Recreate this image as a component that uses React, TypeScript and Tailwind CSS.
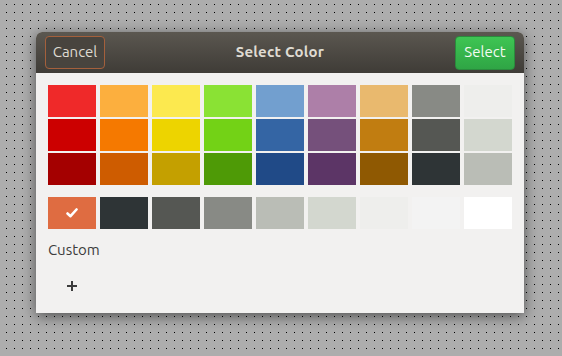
import React from 'react';

const rows = [
  ['#ef2929', '#fcaf3e', '#fce94f', '#8ae234', '#729fcf', '#ad7fa8', '#e9b96e', '#888a85', '#eeeeec'],
  ['#cc0000', '#f57900', '#edd400', '#73d216', '#3465a4', '#75507b', '#c17d11', '#555753', '#d3d7cf'],
  ['#a40000', '#ce5c00', '#c4a000', '#4e9a06', '#204a87', '#5c3566', '#8f5902', '#2e3436', '#babdb6'],
];

const grays = ['#df6c41', '#2e3436', '#555753', '#888a85', '#babdb6', '#d3d7cf', '#eeeeec', '#f3f3f3', '#ffffff'];

const App = () => {
  return (
    <div className="w-[562px] h-[356px] bg-[#adadad] bg-[conic-gradient(from_270deg_at_1px_1px,#000_90deg,transparent_0)] bg-[length:8px_8px] bg-[position:6px_4px] pt-[32px] pl-[36px] font-['Ubuntu','Noto_Sans',sans-serif]">
      <div className="w-[488px] h-[281px] flex flex-col rounded-t-[6px] bg-[#f2f1f0] shadow-[0_3px_14px_rgba(0,0,0,0.55)]">
        <div className="h-[41px] flex items-center justify-between px-[9px] rounded-t-[6px] bg-gradient-to-b from-[#5b5750] to-[#3f3c37]">
          <button className="w-[60px] h-[33px] rounded-[4px] border border-[#a4603c] bg-[#48443e] text-[#dfdbd2] text-[15px]">
            Cancel
          </button>
          <span className="text-[15px] font-bold text-[#dfdbd2] tracking-[0.2px]">Select Color</span>
          <button className="w-[60px] h-[34px] rounded-[4px] border border-[#2b8a3d] bg-gradient-to-b from-[#3ec553] to-[#2fa545] text-[#f4fbf4] text-[15px]">
            Select
          </button>
        </div>

        <div className="flex flex-col pt-[12px] pl-[12px]">
          <div className="grid grid-cols-[repeat(9,48px)] gap-x-[4px] gap-y-[2px]">
            {rows.flat().map((c, i) => (
              <div key={i} className="h-[32px]" style={{ backgroundColor: c }} />
            ))}
          </div>

          <div className="grid grid-cols-[repeat(9,48px)] gap-x-[4px] mt-[12px]">
            {grays.map((c, i) => (
              <div key={i} className="h-[32px] flex items-center justify-center" style={{ backgroundColor: c }}>
                {i === 0 && (
                  <svg width="12" height="10" viewBox="0 0 12 10">
                    <path d="M1.5 5.5 L4.5 8.2 L10.5 1.5" fill="none" stroke="#fff" strokeWidth="2.6" strokeLinecap="round" strokeLinejoin="round" />
                  </svg>
                )}
              </div>
            ))}
          </div>

          <div className="mt-[11px] text-[15px] text-[#3c3c3c] leading-[20px]">Custom</div>

          <div className="w-[48px] h-[32px] mt-[10px] flex items-center justify-center">
            <svg width="12" height="12" viewBox="0 0 12 12">
              <path d="M6 1 V11 M1 6 H11" stroke="#3c3c3c" strokeWidth="2" />
            </svg>
          </div>
        </div>
      </div>
    </div>
  );
};

export default App;
